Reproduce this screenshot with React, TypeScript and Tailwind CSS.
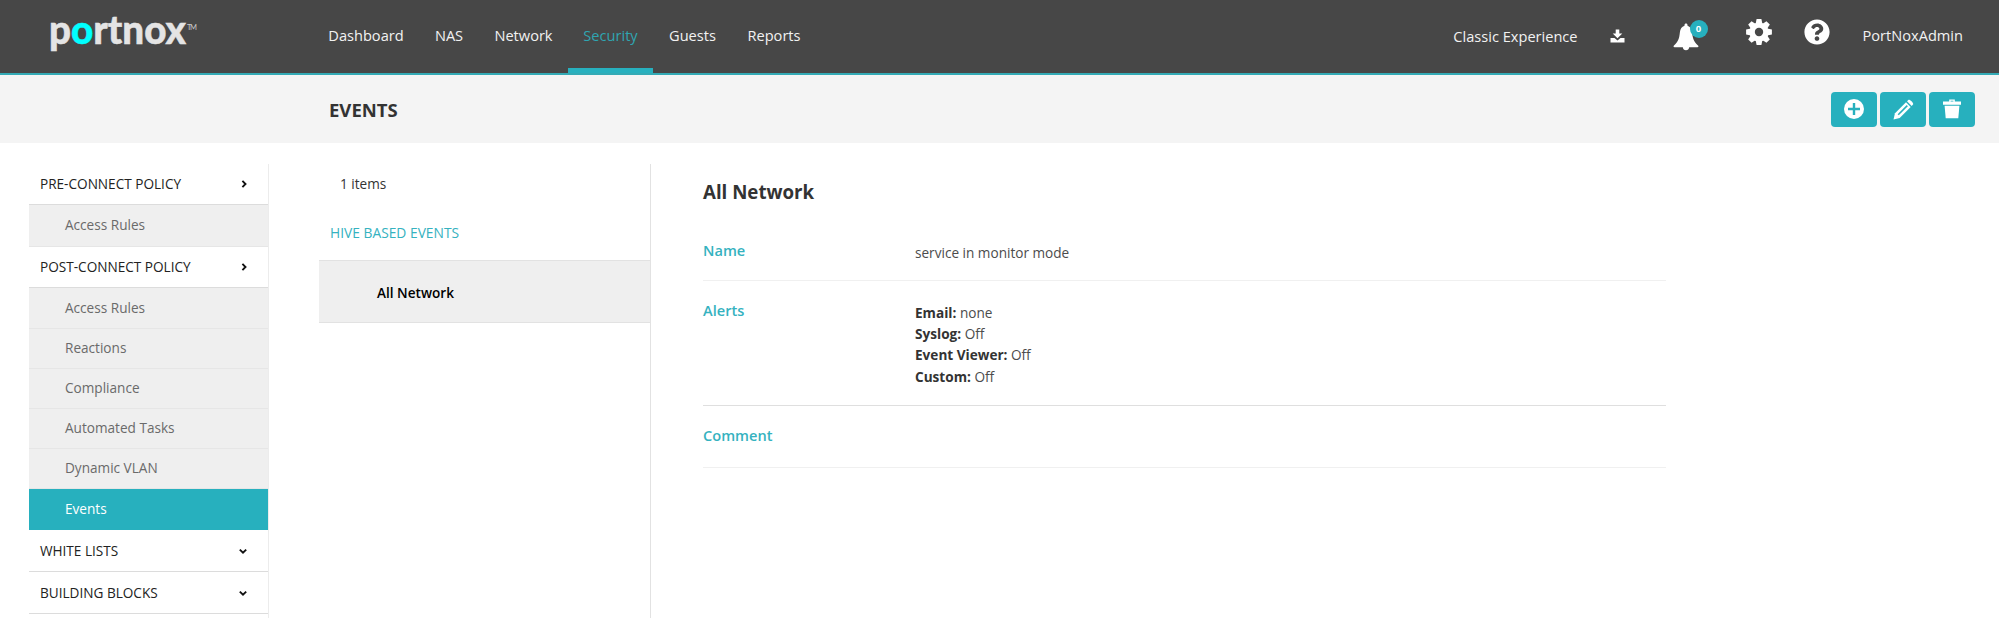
import React from "react";
import { FaQuestionCircle } from "react-icons/fa";

const nav = [
  { t: "Dashboard", w: "w-[106px]" },
  { t: "NAS", w: "w-[60px]" },
  { t: "Network", w: "w-[89px]" },
  { t: "Security", w: "w-[85px]", active: true },
  { t: "Guests", w: "w-[79px]" },
  { t: "Reports", w: "w-[84px]" },
];

function Logo() {
  return (
    <svg width="210" height="73" viewBox="0 0 210 73" className="shrink-0 font-['Lato'] font-black">
      <text x="49" y="44" fontSize="40" textLength="137" lengthAdjust="spacingAndGlyphs" fill="#e4e4e4" stroke="#e4e4e4" strokeWidth="0.5">
        p<tspan fill="#00ffff" stroke="#00ffff">o</tspan>rtnox
      </text>
      <text x="187" y="29.5" fontSize="7.5" fontWeight="400" fill="#c9c9c9" textLength="10">TM</text>
    </svg>
  );
}

function Chevron({ down }: { down?: boolean }) {
  return (
    <svg width="10" height="10" viewBox="0 0 10 10" fill="none" stroke="#111" strokeWidth="1.9">
      <path d={down ? "M1.8 3.6 5 6.6 8.2 3.6" : "M3.4 1.9 6.5 5 3.4 8.1"} />
    </svg>
  );
}

function Download() {
  return (
    <svg width="15" height="14" viewBox="0 0 15 14" fill="#fff" className="ml-[32px] mt-[29px]">
      <path d="M5.7 0.5h3.6v4h3L7.5 9.3 2.7 4.5h3z" />
      <path d="M.5 9h4l3 2.4 3-2.4h4v4.5H.5z" />
    </svg>
  );
}

function Gear() {
  return (
    <svg width="26" height="26" viewBox="-13 -13 26 26" className="ml-[37px] mt-[19px]">
      <g fill="#fff">
        <circle r="9.6" />
        {[0, 45, 90, 135].map((a) => (
          <path key={a} transform={`rotate(${a})`} d="M-2.4-12.9h4.8L3.4-8V8l-1 4.900h-4.800l-1-4.900V-8z" />
        ))}
      </g>
      <circle r="4.2" fill="#474747" />
    </svg>
  );
}

function PlusCircle() {
  return (
    <svg width="20" height="20" viewBox="0 0 20 20">
      <circle cx="10" cy="10" r="10" fill="#fff" />
      <path d="M10 4v12M4 10h12" stroke="#27b0be" strokeWidth="2.4" />
    </svg>
  );
}

function Pencil() {
  return (
    <svg width="21" height="21" viewBox="0 0 21 21">
      <path d="M.5 20.5 2 14.2 13 3.2l4.700 4.700-11 11z" fill="#fff" />
      <path d="m14 2.200 1.300-1.300c1.200-1.200 6 3.400 4.700 4.700l-1.300 1.300z" fill="#fff" />
      <path d="M5.2 15.700 14.300 6.600" stroke="#27b0be" strokeWidth="1.6" />
    </svg>
  );
}

function Trash() {
  return (
    <svg width="18" height="20" viewBox="0 0 18 20" fill="#fff">
      <path d="M6.200 2.500V.6h5.600v1.900H18v3.300H0V2.500zM7.600 2.500h2.800v-.7H7.600z" fillRule="evenodd" />
      <path d="M1.600 6.800h14.800l-1.100 12.400H2.700z" />
    </svg>
  );
}

function ActionButton({ children }: { children: React.ReactNode }) {
  return <button className="flex h-[35px] w-[46px] items-center justify-center rounded-[4px] bg-[#27b0be]">{children}</button>;
}

function Section({ t, h, down }: { t: string; h: string; down?: boolean }) {
  return (
    <div className={`flex items-center justify-between border-b border-[#dcdcdc] pl-[11px] text-[13.6px] text-[#222] ${down ? "pr-[20px] pt-px" : "pr-[19px]"} ${h}`}>
      <span>{t}</span>
      <Chevron down={down} />
    </div>
  );
}

function Sub({ t, h, active }: { t: string; h: string; active?: boolean }) {
  return (
    <div
      className={`flex items-center border-b pl-[36px] text-[13.6px] ${h} ${
        active ? "border-[#27b0be] bg-[#27b0be] text-white" : "border-[#e6e6e6] bg-[#efefef] text-[#6a6a6a]"
      }`}
    >
      {t}
    </div>
  );
}

function Row({ label, h, line, children }: { label: string; h: string; line: string; children?: React.ReactNode }) {
  return (
    <div className={`flex border-b pt-[19px] ${line} ${h}`}>
      <div className="w-[212px] text-[14.6px] font-semibold leading-[21px] text-[#35b2c0]">{label}</div>
      <div className="pt-[1.5px] text-[13.6px] leading-[21.4px] text-[#4c4c4c]">{children}</div>
    </div>
  );
}

export default function App() {
  return (
    <div className="flex h-[618px] w-[1999px] flex-col overflow-hidden bg-white font-['Open_Sans',sans-serif] text-[#333]">
      <header className="flex h-[75px] shrink-0 border-b-2 border-[#33aab5] bg-[#474747] text-[14.6px] text-[#f2f2f2]">
        <Logo />
        <nav className="ml-[103px] flex">
          {nav.map((n) => (
            <div
              key={n.t}
              className={`flex h-[73px] justify-center pt-[25px] leading-[20px] ${n.w} ${
                n.active ? "border-b-[5px] border-[#27b0be] text-[#2fa5b1]" : ""
              }`}
            >
              {n.t}
            </div>
          ))}
        </nav>
        <div className="ml-auto flex">
          <span className="mt-[26px] leading-[20px]">Classic Experience</span>
          <Download />
          <div className="relative ml-[48px] mt-[23px] h-[28px] w-[36px]">
            <svg width="26" height="28" viewBox="0 0 26 28" fill="#fff">
              <path d="M13 .5c-.9 0-1.5.7-1.500 1.600v.7C8.700 3.700 7.300 6 6.900 9.200 6.300 15 5.500 18.500 1 22.400c-.8.7-.5 1.800.6 1.800h8.200c.2 1.800 1.400 3 3.200 3s3-1.200 3.200-3h8.200c1.100 0 1.400-1.100.6-1.800-4.500-3.900-5.300-7.400-5.900-13.200-.4-3.200-1.800-5.500-4.600-6.400v-.7c0-.9-.6-1.600-1.500-1.600z" />
            </svg>
            <span className="absolute left-[17px] top-[-3px] flex size-[18px] items-center justify-center rounded-full bg-[#27b0be] text-[9.5px] font-bold text-white">0</span>
          </div>
          <Gear />
          <FaQuestionCircle className="ml-[32px] mt-[19px] size-[26px]" color="#fff" />
        </div>
        <span className="ml-[33px] mr-[36px] mt-[25px] leading-[20px]">PortNoxAdmin</span>
      </header>

      <div className="flex h-[68px] shrink-0 items-center justify-between bg-[#f4f4f4] pl-[329px] pr-[24px]">
        <h1 className="pt-px text-[18.5px] font-bold">EVENTS</h1>
        <div className="flex gap-[3px]">
          <ActionButton><PlusCircle /></ActionButton>
          <ActionButton><Pencil /></ActionButton>
          <ActionButton><Trash /></ActionButton>
        </div>
      </div>

      <main className="flex min-h-0 flex-1 pl-[29px] pt-[21px]">
        <aside className="w-[240px] shrink-0 border-r border-[#ececec]">
          <Section t="PRE-CONNECT POLICY" h="h-[41px]" />
          <Sub t="Access Rules" h="h-[42px]" />
          <Section t="POST-CONNECT POLICY" h="h-[41px]" />
          <Sub t="Access Rules" h="h-[41px]" />
          <Sub t="Reactions" h="h-[40px]" />
          <Sub t="Compliance" h="h-[40px]" />
          <Sub t="Automated Tasks" h="h-[40px]" />
          <Sub t="Dynamic VLAN" h="h-[40px]" />
          <Sub t="Events" h="h-[41px]" active />
          <Section t="WHITE LISTS" h="h-[42px]" down />
          <Section t="BUILDING BLOCKS" h="h-[42px]" down />
        </aside>
        <section className="ml-[50px] w-[332px] shrink-0 border-r border-[#e2e2e2] text-[13.6px]">
          <div className="pl-[21px] pt-[10px] leading-[20px]">1 items</div>
          <div className="pl-[11px] pt-[29px] text-[13.8px] font-medium leading-[20px] text-[#35b2c0]">HIVE BASED EVENTS</div>
          <div className="mt-[17px] flex h-[63px] items-center border-y border-[#e2e2e2] bg-[#efefef] pl-[58px] pt-[3px] font-semibold text-black">All Network</div>
        </section>
        <section className="ml-[52px] w-[963px]">
          <h2 className="pt-[16px] text-[18.7px] font-bold leading-[24px]">All Network</h2>
          <div className="mt-[17px]">
            <Row label="Name" h="h-[60px]" line="border-[#f0f0f0]">service in monitor mode</Row>
            <Row label="Alerts" h="h-[125px]" line="border-[#dfdfdf]">
              {[["Email", "none"], ["Syslog", "Off"], ["Event Viewer", "Off"], ["Custom", "Off"]].map(([k, v]) => (
                <div key={k}><b className="font-bold text-[#333]">{k}:</b> {v}</div>
              ))}
            </Row>
            <Row label="Comment" h="h-[62px]" line="border-[#f0f0f0]" />
          </div>
        </section>
      </main>
    </div>
  );
}
